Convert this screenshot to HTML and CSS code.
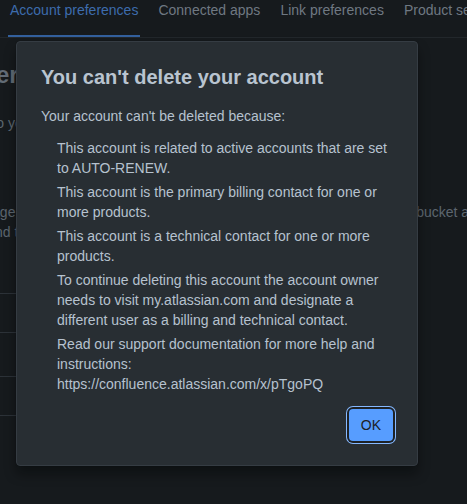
FILE: index.html
```html
<!DOCTYPE html>
<html lang="en">
<head>
  <meta charset="UTF-8" />
  <title>Account preferences</title>
  <meta name="viewport" content="width=device-width, initial-scale=1.0" />
  <link rel="stylesheet" href="styles.css">
</head>
<body>
  <nav class="tabs">
    <a class="tab active">Account preferences</a>
    <a class="tab">Connected apps</a>
    <a class="tab">Link preferences</a>
    <a class="tab">Product settings</a>
  </nav>

  <main class="page">
    <h1 class="page-title">Account preferences</h1>
    <p class="intro">Changes you set apply to your account across all products.</p>

    <p class="note">
      <span class="line">If you still need to manage access to all products like Jira, Confluence, Trello, Loom and Bitbucket after you delete it,</span>
      <span class="line wrap">email your site admins and their organization admins.</span>
    </p>

    <div class="rows">
      <div class="row">Time zone</div>
      <div class="row tall">Language</div>
      <div class="row">Email notifications</div>
    </div>
  </main>

  <div class="modal" role="dialog" aria-labelledby="modal-title">
    <h2 id="modal-title">You can't delete your account</h2>
    <p class="lead">Your account can't be deleted because:</p>
    <ul class="reasons">
      <li>This account is related to active accounts that are set to AUTO-RENEW.</li>
      <li>This account is the primary billing contact for one or more products.</li>
      <li>This account is a technical contact for one or more products.</li>
      <li>To continue deleting this account the account owner needs to visit my.atlassian.com and designate a different user as a billing and technical contact.</li>
      <li>Read our support documentation for more help and instructions: https://confluence.atlassian.com/x/pTgoPQ</li>
    </ul>
    <div class="modal-footer">
      <button class="btn">OK</button>
    </div>
  </div>
</body>
</html>
```

FILE: styles.css
```css
:root {
  --bg: #161a1d;
  --surface: #282e33;
  --text: #b6c2cf;
  --muted: #5c666f;
  --blue: #579dff;
  --blue-ring: #85b8ff;
}

* {
  box-sizing: border-box;
  margin: 0;
  padding: 0;
}

body {
  background: var(--bg);
  font-family: 'Liberation Sans', Arial, sans-serif;
  font-size: 14px;
  line-height: 20px;
  color: var(--muted);
  width: 467px;
  height: 504px;
  overflow: hidden;
  position: relative;
}

.tabs {
  display: flex;
  gap: 16px;
  padding-left: 8px;
  border-bottom: 1px solid #22272b;
  white-space: nowrap;
}

.tab {
  padding: 0 2px 15px;
  color: #6f7882;
  border-bottom: 2px solid transparent;
}

.tab.active {
  color: #3d6cad;
  border-bottom-color: #33609d;
}

.page {
  margin-left: -148px;
  white-space: nowrap;
}

.page-title {
  font-size: 24px;
  line-height: 28px;
  font-weight: bold;
  color: #626c76;
  margin-top: 23px;
  margin-left: -4px;
}

.intro {
  margin-top: 24px;
  margin-left: -6px;
}

.note {
  margin-top: 69px;
}

.note .line {
  display: block;
}

.note .wrap {
  margin-left: -8px;
}

.rows {
  margin-top: 51px;
  width: 300px;
  border-bottom: 1px solid #2c3238;
}

.row {
  height: 39px;
  border-top: 1px solid #2c3238;
  padding: 10px 0 0 180px;
}

.row.tall {
  height: 44px;
}

.modal {
  position: absolute;
  left: 16px;
  top: 41px;
  width: 402px;
  height: 425px;
  background: var(--surface);
  border: 1px solid #353c43;
  border-radius: 4px;
  box-shadow: 0 8px 12px rgba(3, 4, 4, 0.4), 0 0 1px rgba(3, 4, 4, 0.5);
  padding: 23px 24px 24px;
  color: var(--text);
  display: flex;
  flex-direction: column;
}

.modal h2 {
  font-size: 20px;
  line-height: 24px;
  font-weight: bold;
  color: #b9c4d0;
}

.lead {
  margin-top: 17px;
}

.reasons {
  list-style: none;
  padding-left: 16px;
  margin-top: 12px;
  display: flex;
  flex-direction: column;
  gap: 4px;
}

.modal-footer {
  margin-top: auto;
  display: flex;
  justify-content: flex-end;
}

.btn {
  height: 32px;
  padding: 0 12px;
  background: var(--blue);
  color: #1d2125;
  border: none;
  border-radius: 4px;
  font-family: inherit;
  font-size: 14px;
  box-shadow: 0 0 0 2px #1d2125, 0 0 0 3px var(--blue-ring);
  cursor: pointer;
}
```
